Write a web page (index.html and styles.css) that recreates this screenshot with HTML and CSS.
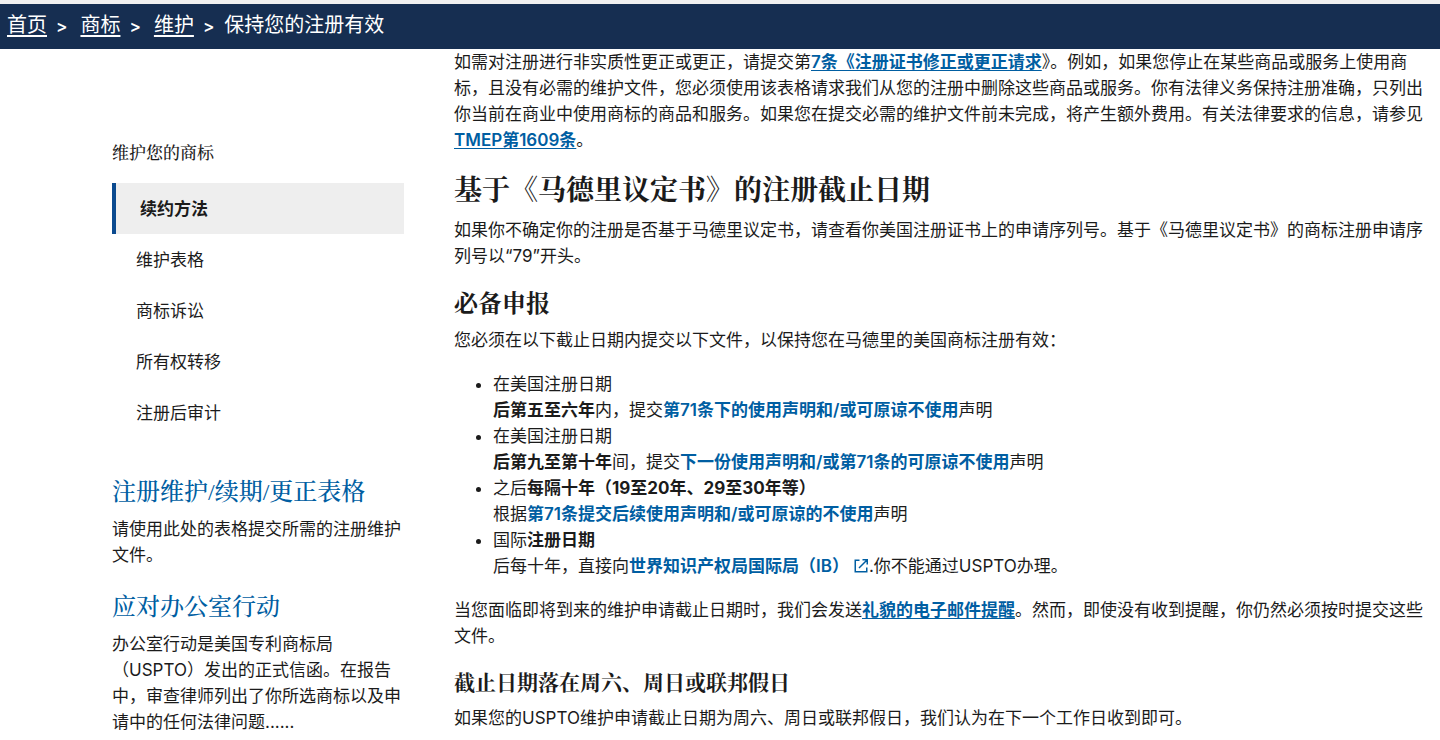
FILE: index.html
```html
<!DOCTYPE html>
<html lang="zh-CN">
<head>
<meta charset="utf-8">
<meta name="viewport" content="width=device-width, initial-scale=1">
<title>保持您的注册有效</title>
<link rel="stylesheet" href="styles.css">
</head>
<body>
<nav class="breadcrumb" aria-label="面包屑">
  <ol class="breadcrumb-list">
    <li class="crumb"><a href="#">首页</a></li>
    <li class="crumb"><a href="#">商标</a></li>
    <li class="crumb"><a href="#">维护</a></li>
    <li class="crumb crumb-current" aria-current="page">保持您的注册有效</li>
  </ol>
</nav>
<div class="page">
  <aside class="sidebar">
    <p class="side-title">维护您的商标</p>
    <nav class="side-nav" aria-label="维护您的商标">
      <a class="side-link side-link-active" href="#" aria-current="page">续约方法</a>
      <a class="side-link" href="#">维护表格</a>
      <a class="side-link" href="#">商标诉讼</a>
      <a class="side-link" href="#">所有权转移</a>
      <a class="side-link" href="#">注册后审计</a>
    </nav>
    <section class="promo">
      <h3 class="promo-title"><a href="#">注册维护/续期/更正表格</a></h3>
      <p class="promo-text">请使用此处的表格提交所需的注册维护文件。</p>
    </section>
    <section class="promo">
      <h3 class="promo-title"><a href="#">应对办公室行动</a></h3>
      <p class="promo-text">办公室行动是美国专利商标局（USPTO）发出的正式信函。在报告中，审查律师列出了你所选商标以及申请中的任何法律问题......</p>
    </section>
  </aside>
  <main class="content">
    <p>如需对注册进行非实质性更正或更正，请提交第<a class="link underlined" href="#">7条《注册证书修正或更正请求</a>》。例如，如果您停止在某些商品或服务上使用商标，且没有必需的维护文件，您必须使用该表格请求我们从您的注册中删除这些商品或服务。你有法律义务保持注册准确，只列出你当前在商业中使用商标的商品和服务。如果您在提交必需的维护文件前未完成，将产生额外费用。有关法律要求的信息，请参见<a class="link underlined" href="#">TMEP第1609条</a>。</p>
    <h2>基于《马德里议定书》的注册截止日期</h2>
    <p>如果你不确定你的注册是否基于马德里议定书，请查看你美国注册证书上的申请序列号。基于《马德里议定书》的商标注册申请序列号以“79”开头。</p>
    <h3>必备申报</h3>
    <p>您必须在以下截止日期内提交以下文件，以保持您在马德里的美国商标注册有效：</p>
    <ul class="filings">
      <li>在美国注册日期<br><strong>后第五至六年</strong>内，提交<a class="link" href="#">第71条下的使用声明和/或可原谅不使用</a>声明</li>
      <li>在美国注册日期<br><strong>后第九至第十年</strong>间，提交<a class="link" href="#">下一份使用声明和/或第71条的可原谅不使用</a>声明</li>
      <li>之后<strong>每隔十年（19至20年、29至30年等）</strong><br>根据<a class="link" href="#">第71条提交后续使用声明和/或可原谅的不使用</a>声明</li>
      <li>国际<strong>注册日期</strong><br>后每十年，直接向<a class="link" href="#">世界知识产权局国际局（IB）<svg class="external" viewBox="0 0 16 16" aria-hidden="true"><path d="M6.500 2.250H2.250V13.750H13.750V9.500M9.500 1.750H14.250V6.500M14 2L6 10"/></svg></a>.你不能通过USPTO办理。</li>
    </ul>
    <p>当您面临即将到来的维护申请截止日期时，我们会发送<a class="link underlined" href="#">礼貌的电子邮件提醒</a>。然而，即使没有收到提醒，你仍然必须按时提交这些文件。</p>
    <h4>截止日期落在周六、周日或联邦假日</h4>
    <p>如果您的USPTO维护申请截止日期为周六、周日或联邦假日，我们认为在下一个工作日收到即可。</p>
  </main>
</div>
</body>
</html>
```
FILE: styles.css
```css
:root {
  --sans: Inter, "Noto Sans CJK SC", sans-serif;
  --serif: "Liberation Serif", "Noto Serif CJK SC", "Source Han Serif SC", "Noto Sans CJK SC", serif;
  --navy: #162e51;
  --blue: #005ea2;
  --blue-dark: #0b4a8f;
  --ink: #1b1b1b;
}

* {
  box-sizing: border-box;
}

body {
  margin: 0;
  background: #fff;
  color: var(--ink);
  font-family: var(--sans);
  font-size: 17px;
  line-height: 26px;
}

.breadcrumb {
  padding: 6px 7px 8px;
  border-top: 4px solid #f0f0f0;
  background: var(--navy);
  color: #fff;
  font-size: 20px;
  line-height: 30px;
}

.breadcrumb-list {
  display: flex;
  margin: 0;
  padding: 0;
  list-style: none;
}

.crumb a {
  color: inherit;
  text-underline-offset: 3px;
}

.crumb + .crumb::before {
  content: ">";
  margin: 0 13px 0 9px;
  font-size: 17px;
  font-weight: 600;
}

.crumb + .crumb-current::before {
  margin-right: 10px;
}

.page {
  display: grid;
  grid-template-columns: 292px minmax(0, 1fr);
  column-gap: 50px;
  padding: 0 12px 0 112px;
}

.sidebar {
  padding-top: 92px;
}

.side-title {
  margin: 0 0 16px;
  font-family: var(--serif);
  font-weight: 500;
}

.side-nav {
  display: flex;
  flex-direction: column;
  margin-bottom: 39px;
}

.side-link {
  padding: 13px 24px 12px;
  color: inherit;
  text-decoration: none;
}

.side-link-active {
  border-left: 4px solid var(--blue-dark);
  background: #eee;
  font-weight: 700;
}

.promo + .promo {
  margin-top: 24px;
}

.promo-title {
  margin: 0 0 9px;
  font-family: var(--serif);
  font-size: 24px;
  font-weight: 500;
  line-height: 30px;
}

.promo-title a {
  color: var(--blue);
  text-decoration: none;
}

.promo-text {
  margin: 0;
}

.content p,
.filings {
  margin: 0 0 18px;
}

.content h2,
.content h3,
.content h4 {
  margin: 20px 0 8px;
  font-family: var(--serif);
  font-weight: 700;
}

.content h2 {
  font-size: 28px;
  line-height: 36px;
}

.content h3 {
  font-size: 24px;
  line-height: 30px;
}

.content h4 {
  font-size: 21px;
  line-height: 28px;
}

.content p:last-child {
  margin-bottom: 0;
}

.filings {
  padding-left: 39px;
}

.link {
  color: var(--blue);
  font-weight: 600;
  text-decoration: none;
}

.underlined {
  text-decoration: underline;
  text-underline-offset: 2px;
}

.external {
  width: 16px;
  height: 16px;
  margin-left: 4px;
  vertical-align: -2px;
  fill: none;
  stroke: currentColor;
  stroke-width: 1.500;
}
```
